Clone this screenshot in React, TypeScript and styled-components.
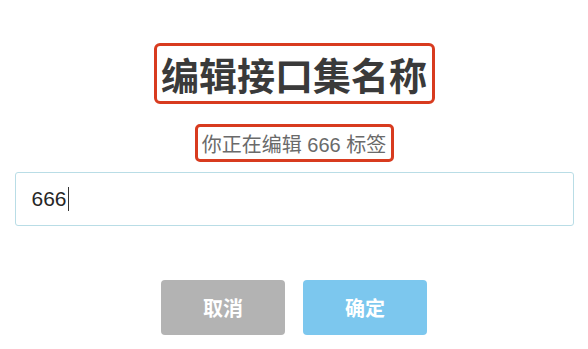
import React from 'react';
import styled, { createGlobalStyle } from 'styled-components';

const GlobalStyle = createGlobalStyle`
  html, body {
    margin: 0;
    padding: 0;
    background: #ffffff;
    font-family: "Liberation Sans", "Noto Sans CJK SC", sans-serif;
  }
`;

const Dialog = styled.div`
  width: 588px;
  height: 349px;
  display: flex;
  flex-direction: column;
  align-items: center;
  padding-top: 43px;
  box-sizing: border-box;
`;

// red annotation frame drawn round the title texts
const Highlight = styled.div<{ radius: number; top: number }>`
  margin-top: ${p => p.top}px;
  border: 3px solid #d83b1f;
  border-radius: ${p => p.radius}px;
`;

const Title = styled.h1`
  margin: 0;
  width: 275px;
  height: 55px;
  display: flex;
  align-items: center;
  justify-content: center;
  font-size: 38px;
  font-weight: 700;
  color: #3a3a3a;
  white-space: nowrap;
`;

const Subtitle = styled.p`
  margin: 0;
  width: 193px;
  height: 32px;
  display: flex;
  align-items: center;
  justify-content: center;
  font-size: 20px;
  color: #6a6a6a;
  white-space: nowrap;
`;

const InputBox = styled.div`
  margin-top: 10px;
  width: 559px;
  height: 54px;
  border: 1px solid #b9dde6;
  border-radius: 3px;
  box-sizing: border-box;
  display: flex;
  align-items: center;
  padding-left: 16px;
  font-size: 21px;
  color: #262626;
`;

const Caret = styled.span`
  display: inline-block;
  width: 1.5px;
  height: 24px;
  background: #333333;
  margin-left: 1px;
`;

const Actions = styled.div`
  margin-top: 54px;
  display: flex;
  gap: 18px;
`;

const Button = styled.button<{ primary?: boolean }>`
  width: 124px;
  height: 55px;
  border: none;
  border-radius: 4px;
  background: ${p => (p.primary ? '#7cc7ee' : '#b3b3b3')};
  color: #ffffff;
  font-family: inherit;
  font-size: 20px;
  font-weight: 700;
  padding: 0;
`;

export default function App() {
  return (
    <>
      <GlobalStyle />
      <Dialog>
        <Highlight radius={6} top={0}>
          <Title>编辑接口集名称</Title>
        </Highlight>
        <Highlight radius={5} top={20}>
          <Subtitle>你正在编辑 666 标签</Subtitle>
        </Highlight>
        <InputBox>
          666
          <Caret />
        </InputBox>
        <Actions>
          <Button>取消</Button>
          <Button primary>确定</Button>
        </Actions>
      </Dialog>
    </>
  );
}
